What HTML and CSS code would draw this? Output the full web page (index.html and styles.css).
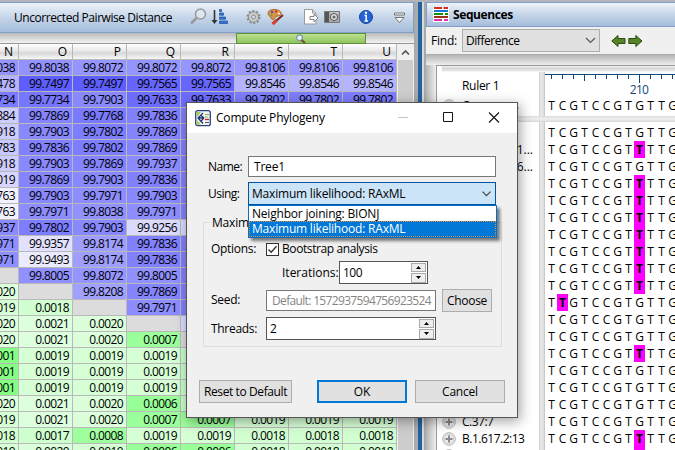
FILE: index.html
```html
<!DOCTYPE html>
<html lang="en">
<head>
<meta charset="utf-8">
<title>Compute Phylogeny</title>
<link rel="stylesheet" href="styles.css">
</head>
<body>
<div class="app">
  <section class="left">
    <header class="bar left-bar">
      <span class="bar-title">Uncorrected Pairwise Distance</span>
      <svg class="tools" width="225" height="29" viewBox="0 0 225 29">
        <g fill="none"><circle cx="15.500" cy="11" r="5" stroke="#999" stroke-width="1.500" fill="#dce6f1"/><path d="M11.500 15l-5.500 5.500" stroke="#999" stroke-width="2.500"/></g>
        <path d="M29.500 7v12" stroke="#333" stroke-width="1.600"/><path d="M26.500 17h6l-3 4z" fill="#333"/>
        <g fill="#3c78d8" stroke="#134a9c" stroke-width=".7"><path d="M34.500 6.500h2v2h-2zM34.500 10h4v2.200h-4zM34.500 14h6v2.200h-6zM34.500 18h8v2.500h-8z"/></g>
        <circle cx="68.500" cy="14" r="5.200" fill="#ccc" stroke="#888"/><circle cx="68.500" cy="14" r="6.200" fill="none" stroke="#888" stroke-width="1.600" stroke-dasharray="2 1.900"/><circle cx="68.500" cy="14" r="2" fill="#d4deeb" stroke="#888"/>
        <path d="M83 10c0-3 4-4 8-3.500s6 3 5 5-4 1-5 2-1 3-3 3-2-2-3-3-2-1-2-3.500z" fill="#d89146" stroke="#a85c22" stroke-width=".8"/><circle cx="87" cy="9" r="1.200" fill="#3561c8"/><circle cx="91" cy="8.500" r="1.100" fill="#d22"/><circle cx="94" cy="10.500" r="1.100" fill="#fff"/><circle cx="86.500" cy="12.500" r="1" fill="#4a4"/><path d="M98 12l-7 6" stroke="#7b2a1a" stroke-width="2"/><path d="M91.500 17.500l-4 3.500" stroke="#d33f2a" stroke-width="3"/>
        <path d="M119.500 6.500h8l3.500 3.500v11h-11.500z" fill="#fff" stroke="#999"/><path d="M127.500 6.500v3.500h3.500" fill="#ddd" stroke="#999"/><path d="M125 13.500h4v-2.500l4 4-4 4v-2.500h-4z" fill="#fff" stroke="#777" stroke-width=".9"/>
        <path d="M139.500 8.500h15v11h-15z" fill="#aaa" stroke="#777"/><path d="M140 9h4v10h-4z" fill="#555"/><path d="M141 7.500h3M145.500 10h8" stroke="#eee"/><circle cx="149" cy="14" r="3.600" fill="#ddd" stroke="#555"/><circle cx="149" cy="14" r="1.500" fill="#666"/>
        <circle cx="181" cy="14" r="6.500" fill="#2461d6" stroke="#164599"/><path d="M179.500 12.500h1.700v5.500M179.500 18h3.500" stroke="#fff" stroke-width="1.500" fill="none"/><circle cx="181" cy="9.800" r="1.200" fill="#fff"/>
        <path d="M209.500 10h10v2h-10zM210 14.500h9l-4.500 5z" fill="#fff" stroke="#666" stroke-width=".9"/>
      </svg>
    </header>
    <div class="minimap">
      <div class="range"><svg width="12" height="10" viewBox="0 0 12 10"><circle cx="4.500" cy="3.800" r="2.900" fill="#e5f2ff" stroke="#7997a7" stroke-width="1.200"/><path d="M6.500 6l3.500 3" stroke="#754b34" stroke-width="2.200"/></svg></div>
    </div>
    <div class="matrix">
      <div class="cells" id="cells"></div>
      <div class="vscroll"><svg width="15" height="16" viewBox="0 0 15 16"><path d="M4 10.500l3.500-3.500 3.500 3.500" fill="none" stroke="#555" stroke-width="1.700"/></svg><div class="thumb"></div></div>
    </div>
  </section>

  <div class="divider"></div>

  <section class="right">
    <header class="bar right-bar">
      <svg width="16" height="15" viewBox="0 0 16 15"><path d="M0 0h16v15H0z" fill="#fff"/><path d="M1 1h8M10.500 1h4.500" stroke="#d92c20" stroke-width="2"/><path d="M1 4h14" stroke="#1679d5" stroke-width="2"/><path d="M1 7h9M12 7h3" stroke="#109010" stroke-width="2"/><path d="M1 10h14" stroke="#9a3214" stroke-width="2"/><path d="M1 13h8M11 13h4" stroke="#db31aa" stroke-width="2"/></svg>
      <b>Sequences</b>
    </header>
    <div class="find">
      <span>Find:</span>
      <div class="find-select"><span>Difference</span><svg width="11" height="7" viewBox="0 0 11 7"><path d="M1 1l4.500 4.500L10 1" fill="none" stroke="#555" stroke-width="1.200"/></svg></div>
      <svg width="32" height="14" viewBox="0 0 32 14"><g fill="#568327" stroke="#294c10"><path d="M.8 7L7 1.500v3h7v5H7v3z"/><path d="M31 7l-6.200-5.500v3h-7v5h7v3z"/></g></svg>
    </div>
    <div class="align-shell">
      <div class="align">
        <div class="split-h"></div>
        <div class="ruler-row">
          <div class="names"><div class="ruler-name">Ruler 1</div><div class="name"><svg class="plus" width="14" height="14" viewBox="0 0 14 14"><circle cx="7" cy="7" r="6.300" fill="#fff" stroke="#999" stroke-width=".8"/><circle cx="7" cy="7" r="4.800" fill="#eee" stroke="#aaa" stroke-width=".6"/><path d="M3.500 7h7M7 3.500v7" stroke="#888" stroke-width="2"/></svg>Consensus</div></div>
          <div class="split-v"></div>
          <div class="ruler-area">
            <div class="ruler"><svg width="130" height="9" viewBox="0 0 130 9"><path d="M0 .5h130M6.500 0v5M17.500 0v5M28.500 0v5M39.500 0v7M50.500 0v5M61.500 0v5M72.500 0v5M83.500 0v5M94.500 0v9M105.500 0v5M116.500 0v5M127.500 0v5" stroke="#104878"/></svg><span>210</span></div>
            <div class="seq" id="consensus"></div>
          </div>
        </div>
        <div class="split-h lower"></div>
        <div class="seq-row">
          <div class="names list" id="names"></div>
          <div class="split-v"></div>
          <div class="seqs" id="seqs"></div>
        </div>
      </div>
    </div>
  </section>
</div>

<div class="dialog">
  <div class="titlebar">
    <svg width="16" height="17" viewBox="0 0 16 17"><rect x=".7" y=".7" width="14.600" height="15" rx="2" fill="#eef4fa" stroke="#2c437d" stroke-width="1.300"/><path d="M2 2h4L2 7zM2 10l4 4.500H2z" fill="#a6cb43"/><path d="M8 3L3 8l5 5.500M6 5.500l3 2.500M6 11l3-3M3.500 8H9" fill="none" stroke="#23386d" stroke-width="1.300"/><path d="M10 4.500h4M10 7h3" stroke="#93b33c" stroke-width="1.200"/><path d="M10 9.500h4" stroke="#cf2020" stroke-width="1.300"/><path d="M10 12.500h4" stroke="#555"/></svg>
    <span>Compute Phylogeny</span>
    <svg class="winbtns" width="104" height="12" viewBox="0 0 104 12"><path d="M0 5.500h10" stroke="#c4c4c4"/><path d="M45.500.5h9v9h-9z" fill="none" stroke="#111"/><path d="M91 .5l10 10M101 .5l-10 10" stroke="#111" stroke-width="1.100"/></svg>
  </div>
  <div class="form">
    <label class="w-label">Name:</label><div class="input name-input">Tree1</div>
    <label class="w-label">Using:</label>
    <div class="combo"><span>Maximum likelihood: RAxML</span><svg width="9" height="6" viewBox="0 0 9 6"><path d="M.5.700l4 4 4-4" fill="none" stroke="#444" stroke-width="1.200"/></svg>
      <div class="menu"><div class="option">Neighbor joining: BIONJ</div><div class="option selected">Maximum likelihood: RAxML</div></div>
    </div>
  </div>
  <div class="group">
    <span class="legend">Maxim</span>
    <div class="line l1"><span class="g-label">Options:</span><span class="check"><svg width="11" height="11" viewBox="0 0 11 11"><path d="M1.500 5.500l2.700 2.700 5.300-6" fill="none" stroke="#333" stroke-width="1.400"/></svg></span><span class="check-text">Bootstrap analysis</span></div>
    <div class="line l2"><span class="iter">Iterations:</span><div class="spin s1"><span>100</span><i class="arrows"><b><svg width="5" height="3" viewBox="0 0 5 3"><path d="M0 3l2.500-3L5 3z"/></svg></b><b><svg width="5" height="3" viewBox="0 0 5 3"><path d="M0 0l2.500 3L5 0z"/></svg></b></i></div></div>
    <div class="line l3"><span class="g-label">Seed:</span><div class="input seed">Default: 1572937594756923524</div><div class="button choose">Choose</div></div>
    <div class="line l4"><span class="g-label">Threads:</span><div class="spin s2"><span>2</span><i class="arrows"><b><svg width="5" height="3" viewBox="0 0 5 3"><path d="M0 3l2.500-3L5 3z"/></svg></b><b><svg width="5" height="3" viewBox="0 0 5 3"><path d="M0 0l2.500 3L5 0z"/></svg></b></i></div></div>
  </div>
  <div class="actions"><div class="button reset">Reset to Default</div><div class="button ok">OK</div><div class="button">Cancel</div></div>
</div>
<script src="script.js"></script>
</body>
</html>
```
FILE: styles.css
```css
* { box-sizing: border-box; }
body {
  margin: 0;
  width: 675px;
  height: 450px;
  overflow: hidden;
  position: relative;
  background: #f0f0f0;
  color: #000;
  font-family: "Open Sans", "Noto Sans", sans-serif;
  font-size: 12px;
  letter-spacing: -.2px;
  line-height: 16px;
  white-space: nowrap;
}
svg { display: block; flex: none; }
.app { display: flex; width: 675px; height: 450px; border-top: 2px solid #b4b4bc; }

.left { width: 415px; flex: none; border-right: 1px solid #a8a8a8; overflow: hidden; }
.bar { display: flex; align-items: center; border: 1px solid #7f9fca; background: linear-gradient(#edf3fa, #c9d8ea 45%, #a5bddb); }
.left-bar { height: 31px; border-left: 0; }
.bar-title { width: 185px; padding-left: 14px; flex: none; letter-spacing: -.44px; }
.tools { margin-top: -1px; }
.minimap { height: 11px; padding-left: 236px; background: linear-gradient(#b9b9b9, #f3f3f3); border-bottom: 1px solid #999; }
.range { width: 130px; height: 11px; border: 1px solid #5f8f3b; background: linear-gradient(#bce08f, #8fc45e); display: flex; justify-content: center; }
.matrix { display: flex; height: 406px; }
.cells { width: 397px; display: grid; grid-template-columns: 19px repeat(7, 54px); grid-template-rows: 16px repeat(25, 16px); letter-spacing: -.6px; }
.cells div { border-right: 1px solid #b9b9b9; border-bottom: 1px solid #b9b9b9; padding-right: 3px; display: flex; justify-content: flex-end; line-height: 16px; overflow: hidden; }
.cells .head { background: linear-gradient(#fff, #e9e9e9 45%, #d8d8d8 60%, #f7f7f7); padding-right: 5px; letter-spacing: 0; }
.vscroll { width: 16px; padding-left: 1px; background: #f0f0f0; }
.thumb { height: 390px; background: #cdcdcd; }

.divider { width: 11px; flex: none; background: linear-gradient(90deg, #ababab 0 3px, #2162a2 3px 7px, #d8d8d8 7px 9px, #a9a9a9 9px 11px); }

.right { flex: 1; min-width: 0; display: flex; flex-direction: column; }
.right-bar { height: 25px; padding-left: 6px; gap: 4px; border-right: 0; flex: none; letter-spacing: -.4px; }
.find { height: 28px; display: flex; align-items: center; padding-left: 5px; border-bottom: 1px solid #aaa; flex: none; }
.find > span { width: 31px; }
.find-select { width: 138px; height: 23px; border: 1px solid #adadad; background: #e1e1e1; display: flex; align-items: center; justify-content: space-between; padding: 0 3px; margin-right: 11px; letter-spacing: -.45px; }
.align-shell { flex: 1; padding: 10px 0 0 10px; background: linear-gradient(#b5b5b5, #eee 10px, transparent 10px), linear-gradient(90deg, #b5b5b5, #eee 10px); }
.align { height: 385px; border-left: 1px solid #9a9a9a; border-top: 1px solid #9a9a9a; background: #fff; display: flex; flex-direction: column; }
.split-h { height: 6px; margin-left: 5px; background: linear-gradient(#f4f4f4, #d6d6d6 35%, #e6e6e6 80%, #fff); flex: none; }
.lower { background: linear-gradient(#ddd, #efefef 50%, #d6d6d6); margin-left: 0; }
.ruler-row { display: flex; height: 44px; }
.names { width: 102px; padding-left: 5px; flex: none; letter-spacing: -.5px; }
.split-v { width: 6px; background: linear-gradient(90deg, #c9c9c9, #eaeaea 30%, #ddd 80%, #bbb); flex: none; }
.ruler-name { height: 25px; line-height: 28px; padding-left: 20px; letter-spacing: -.3px; }
.name { height: 17px; line-height: 17px; display: flex; align-items: center; }
.plus { margin-right: 6px; }
.ruler { height: 25px; padding-top: 2px; color: #104878; letter-spacing: -.7px; }
.ruler span { display: block; width: 24px; margin-left: 82px; text-align: center; line-height: 12px; margin-top: 1px; }
.ruler-area { overflow: hidden; }
.seq-row { display: flex; flex: 1; overflow: hidden; }
.list { padding-top: 2px; }
.list .tail { justify-content: flex-end; padding-right: 22px; }
.list .wide { padding-right: 6px; letter-spacing: 0; }
.seqs { padding-top: 2px; overflow: hidden; }
.seq { height: 17px; display: flex; line-height: 17px; padding-left: 1px; letter-spacing: 0; }
.seq span { width: 11px; flex: none; text-align: center; }
.seq .diff { background: #f0f; font-weight: bold; }

.dialog { position: absolute; left: 186px; top: 102px; width: 332px; height: 316px; background: #f0f0f0; border: 1px solid #555; box-shadow: 2px 3px 12px rgba(0, 0, 0, .38); }
.titlebar { height: 30px; background: #fff; display: flex; align-items: center; padding-left: 8px; }
.titlebar > span { margin-left: 5px; width: 182px; }
.form { padding: 23px 0 0 21px; display: grid; grid-template-columns: 40px 248px; grid-template-rows: 21px 23px; row-gap: 5px; align-items: center; }
.w-label { letter-spacing: -.5px; }
.input { height: 21px; border: 1px solid #777; background: #fff; line-height: 19px; padding-left: 5px; }
.combo { position: relative; height: 23px; border: 1px solid #0054a0; background: #cce4f7; display: flex; align-items: center; justify-content: space-between; padding: 0 4px 0 3px; }
.menu { position: absolute; left: -1px; top: 22px; width: 249px; height: 33px; background: #fff; border: 1px solid #0070c8; box-shadow: 3px 3px 3px rgba(0, 0, 0, .5); z-index: 2; }
.option { height: 15px; line-height: 15px; padding-left: 3px; }
.selected { height: 16px; background: #0078d7; color: #fff; outline: 1px dotted #e08c3c; outline-offset: -1px; }
.group { position: relative; margin: 17px 0 0 16px; width: 299px; height: 125px; border: 1px solid #dcdcdc; padding: 15px 0 0 7px; }
.legend { position: absolute; left: 6px; top: -8px; background: #f0f0f0; padding: 0 2px; }
.line { display: flex; align-items: center; }
.g-label { width: 55px; flex: none; letter-spacing: -.3px; }
.l1 { height: 22px; }
.check { width: 13px; height: 13px; border: 1px solid #333; background: #fff; margin-right: 3px; }
.check-text { letter-spacing: -.4px; }
.l2 { height: 23px; margin-top: 1px; }
.iter { padding-left: 71px; width: 128px; flex: none; letter-spacing: 0; }
.spin { height: 23px; border: 1px solid #555; background: #fff; display: flex; align-items: center; justify-content: space-between; padding: 0 0 0 3px; letter-spacing: -.5px; }
.s1 { width: 89px; }
.s2 { width: 170px; }
.arrows { width: 15px; height: 20px; display: flex; flex-direction: column; gap: 1px; margin-right: 1px; }
.arrows b { flex: 1; border: 1px solid #aaa; background: #eee; display: flex; align-items: center; justify-content: center; }
.l3 { height: 24px; margin-top: 4px; }
.seed { width: 170px; color: #858585; margin-right: 6px; letter-spacing: -.66px; }
.l4 { height: 23px; margin-top: 5px; }
.button { width: 90px; height: 23px; border: 1px solid #adadad; background: #e1e1e1; text-align: center; line-height: 21px; flex: none; }
.choose { width: 50px; letter-spacing: -.3px; }
.actions { display: flex; padding: 33px 0 0 12px; gap: 8px; }
.reset { width: 93px; margin-right: 17px; letter-spacing: -.4px; }
.ok { border: 2px solid #0078d7; line-height: 19px; }
```
FILE: script.js
```js
const stops = [[99.7497, 94], [99.7565, 102], [99.7734, 118], [99.7802, 125], [99.7903, 136], [99.8072, 149], [99.8174, 158], [99.8546, 180], [99.9256, 218], [99.9493, 235]];

function blue(value) {
  let i = 1;
  while (i < stops.length - 1 && value > stops[i][0]) i++;
  const [a, x] = stops[i - 1];
  const [b, y] = stops[i];
  const c = Math.round(x + (y - x) * (value - a) / (b - a));
  return `rgb(${c},${c},255)`;
}

function green(value) {
  const c = Math.round(value < 0.0009 ? 130 + value * 36000 : 206 + (value - 0.0017) * 40000);
  return `rgb(${c},255,${c})`;
}

// First column is cut by the pane edge: visible digits and tint.
const first = [
  ["038", "#9494ff"], ["478", "#b4b4ff"], ["734", "#7b7bff"], ["884", "#ccccff"], ["918", "#ccccff"],
  ["783", "#c8c8ff"], ["918", "#ccccff"], ["019", "#d6d6ff"], ["763", "#f2f2ff"], ["763", "#f2f2ff"],
  ["937", "#8b8bff"], ["971", "#8f8fff"], ["971", "#8f8fff"], ["", "#dcdcdc"], ["020", "#dcffdc"],
  ["019", "#d6ffd6"], ["020", "#dcffdc"], ["020", "#dcffdc"], ["001", "#84ff84"], ["001", "#84ff84"],
  ["001", "#84ff84"], ["020", "#dcffdc"], ["019", "#d6ffd6"], ["018", "#d2ffd2"], ["019", "#d6ffd6"]
];

const rows = [
  "99.8038 99.8072 99.8072 99.8072 99.8106 99.8106 99.8106",
  "99.7497 99.7497 99.7565 99.7565 99.8546 99.8546 99.8546",
  "99.7734 99.7903 99.7633 99.7633 99.7802 99.7802 99.7802",
  "99.7869 99.7768 99.7836", "99.7903 99.7802 99.7869", "99.7836 99.7802 99.7869",
  "99.7903 99.7869 99.7937", "99.7869 99.7903 99.7836", "99.7903 99.7971 99.7903",
  "99.7971 99.8038 99.7971", "99.7802 99.7903 99.9256", "99.9357 99.8174 99.7836",
  "99.9493 99.8174 99.7836", "99.8005 99.8072 99.8005", "- 99.8208 99.7869",
  "0.0018 - 99.7971", "0.0021 0.0020 -", "0.0021 0.0020 0.0007",
  "0.0019 0.0019 0.0019", "0.0019 0.0019 0.0019", "0.0019 0.0019 0.0019",
  "0.0021 0.0020 0.0006", "0.0021 0.0020 0.0007 0.0007 0.0019 0.0019 0.0019",
  "0.0017 0.0008 0.0019 0.0019 0.0018 0.0018 0.0018",
  "0.0020 0.0019 0.0006 0.0006 0.0018 0.0018 0.0018"
];

const cells = document.getElementById("cells");
function cell(text, color, className) {
  const el = document.createElement("div");
  el.textContent = text;
  if (color) el.style.background = color;
  if (className) el.className = className;
  cells.append(el);
}

"NOPQRSTU".split("").forEach(letter => cell(letter, "", "head"));
rows.forEach((row, r) => {
  cell(first[r][0], first[r][1]);
  const values = row.split(" ");
  for (let c = 0; c < 7; c++) {
    const v = values[c];
    if (v === undefined) cell("", r === 10 ? "#dadaff" : r < 16 ? "#8080ff" : r === 16 ? "#dcdcff" : r === 17 ? "#dcdcdc" : "#c8ffc8");
    else if (v === "-") cell("", "#dcdcdc");
    else cell(v, v > 1 ? blue(+v) : green(+v));
  }
});

function sequence(parent, marked) {
  "TCGTCCGTGTTG".split("").forEach((base, i) => {
    const el = document.createElement("span");
    el.textContent = i === marked ? "T" : base;
    if (i === marked) el.className = "diff";
    parent.append(el);
  });
}

sequence(document.getElementById("consensus"), -1);

const labels = { 1: "1...", 2: "6...", 3: "7", 5: "0", 6: "6", 7: "5", 8: "2", 9: "3", 13: "8", 17: "C.37:7", 18: "B.1.617.2:13", 19: "" };
const marks = { 1: 8, 3: 8, 4: 8, 5: 8, 6: 8, 7: 8, 8: 8, 9: 8, 10: 1, 13: 8, 18: 8, 19: 8 };
const plus = document.querySelector(".plus");
for (let i = 0; i < 20; i++) {
  const name = document.createElement("div");
  name.className = "name" + (i < 17 ? " tail" : "") + (i === 1 || i === 2 ? " wide" : "");
  if (i > 16) name.append(plus.cloneNode(true));
  name.append(labels[i] || "");
  document.getElementById("names").append(name);
  const line = document.createElement("div");
  line.className = "seq";
  sequence(line, i in marks ? marks[i] : -1);
  document.getElementById("seqs").append(line);
}
```
